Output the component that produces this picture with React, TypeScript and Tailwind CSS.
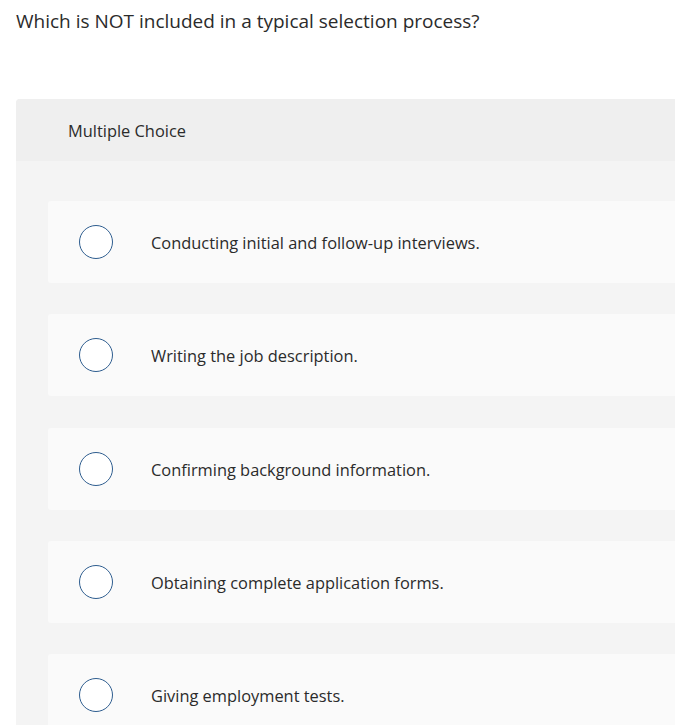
const OPTIONS = [
  'Conducting initial and follow-up interviews.',
  'Writing the job description.',
  'Confirming background information.',
  'Obtaining complete application forms.',
  'Giving employment tests.',
];

export default function App() {
  return (
    <div
      className="h-[725px] w-[675px] overflow-hidden bg-white text-[#2b2b2b]"
      style={{ fontFamily: '"Open Sans", "Liberation Sans", sans-serif' }}
    >
      <h1 className="px-4 pt-[8px] text-[19px] leading-[26px]">
        Which is NOT included in a typical selection process?
      </h1>

      <section className="ml-4 mt-[65px] w-[720px] rounded-tl-[4px] bg-[#f4f4f4]">
        <div className="flex h-[62px] items-center rounded-tl-[4px] bg-[#efefef] pl-[52px] pt-[2px] text-[16.4px]">
          Multiple Choice
        </div>

        <div className="flex flex-col gap-[31.3px] pl-8 pt-10">
          {OPTIONS.map((opt) => (
            <label
              key={opt}
              className="flex h-[82px] items-center rounded-[3px] bg-[#fafafa] pl-[31px]"
            >
              <span className="h-[34px] w-[34px] shrink-0 rounded-full border-[1.5px] border-[#2e5d8f] bg-white" />
              <span className="ml-[38px] pt-[3px] text-[16.4px]">{opt}</span>
            </label>
          ))}
        </div>
      </section>
    </div>
  );
}
